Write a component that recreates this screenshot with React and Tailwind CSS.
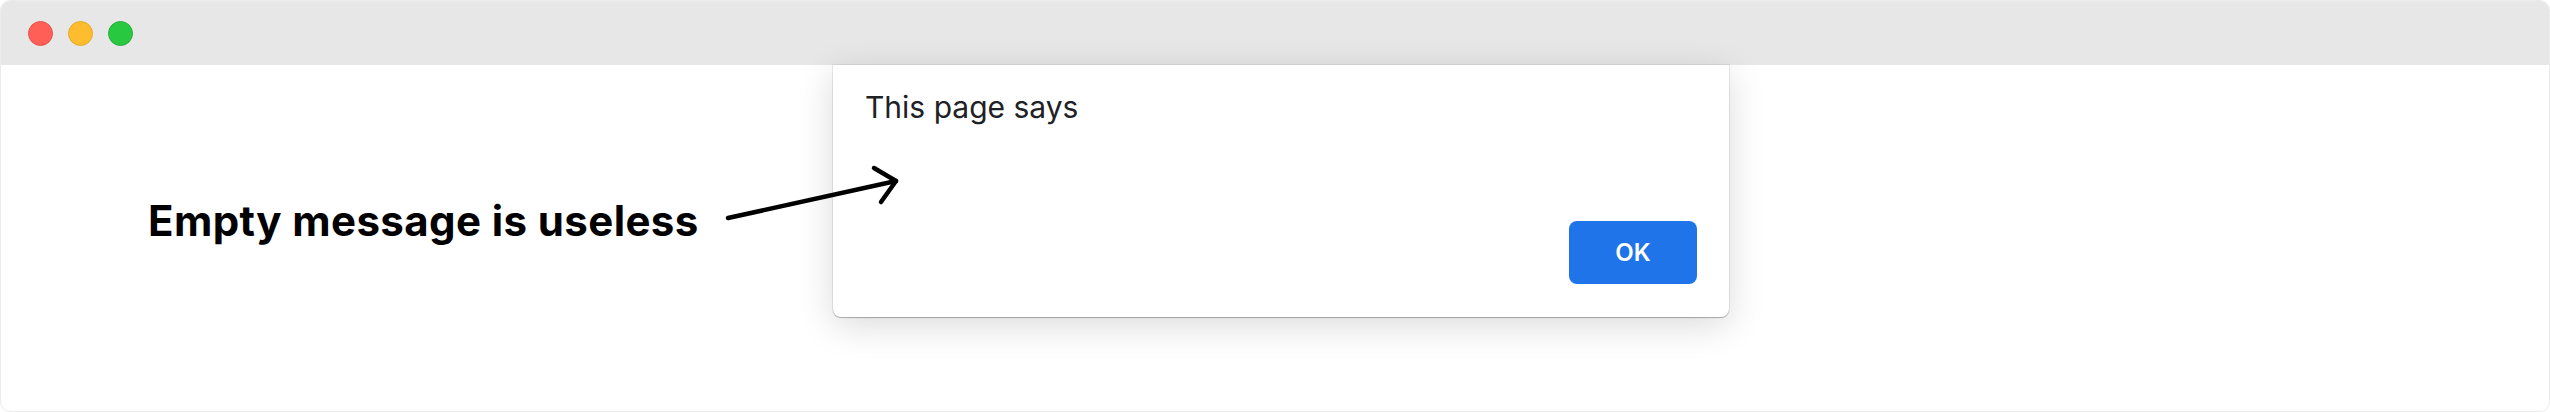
import React from 'react';

function TrafficLights() {
  return (
    <div className="flex items-center gap-[15px] pl-[27px]">
      <span className="block h-[25px] w-[25px] rounded-full border border-[#e9524a] bg-[#ff5f57]" />
      <span className="block h-[25px] w-[25px] rounded-full border border-[#e6a92a] bg-[#febc2e]" />
      <span className="block h-[25px] w-[25px] rounded-full border border-[#22b03a] bg-[#28c840]" />
    </div>
  );
}

function Arrow() {
  // hand drawn arrow pointing into the dialog
  return (
    <svg
      className="pointer-events-none absolute left-[700px] top-[140px]"
      width="220"
      height="100"
      viewBox="700 140 220 100"
      fill="none"
      stroke="#000"
      strokeWidth="4.5"
      strokeLinecap="round"
      strokeLinejoin="round"
    >
      <path d="M727 217 L895 180" />
      <path d="M873 167 L895 180 L880 201" />
    </svg>
  );
}

export default function App() {
  return (
    <div
      className="relative flex h-[412px] w-full flex-col overflow-hidden rounded-[10px] border border-[#ececec] bg-white"
      style={{ fontFamily: 'Inter, "Liberation Sans", sans-serif' }}
    >
      <div className="flex h-16 shrink-0 items-center bg-[#e7e7e7]">
        <TrafficLights />
      </div>

      <div className="relative flex flex-1 items-start">
        <div className="pl-[147px] pt-[135px] text-[42px] font-bold leading-none tracking-[0.4px] text-black">
          Empty message is useless
        </div>

        <div className="absolute left-[832px] top-0 flex h-[252px] w-[896px] flex-col justify-between rounded-b-[8px] bg-white pb-[33px] pl-[32px] pr-[32px] pt-[27px] shadow-[0_1px_1px_rgba(0,0,0,0.25),0_0_0_1px_rgba(0,0,0,0.06),0_8px_36px_rgba(0,0,0,0.15)]">
          <p className="text-[30px] leading-none text-[#202124]">This page says</p>
          <div className="flex justify-end">
            <button className="flex h-[63px] w-[128px] items-center justify-center rounded-[8px] bg-[#1e74e8] text-[24px] font-semibold text-white">
              OK
            </button>
          </div>
        </div>
      </div>

      <Arrow />
    </div>
  );
}
